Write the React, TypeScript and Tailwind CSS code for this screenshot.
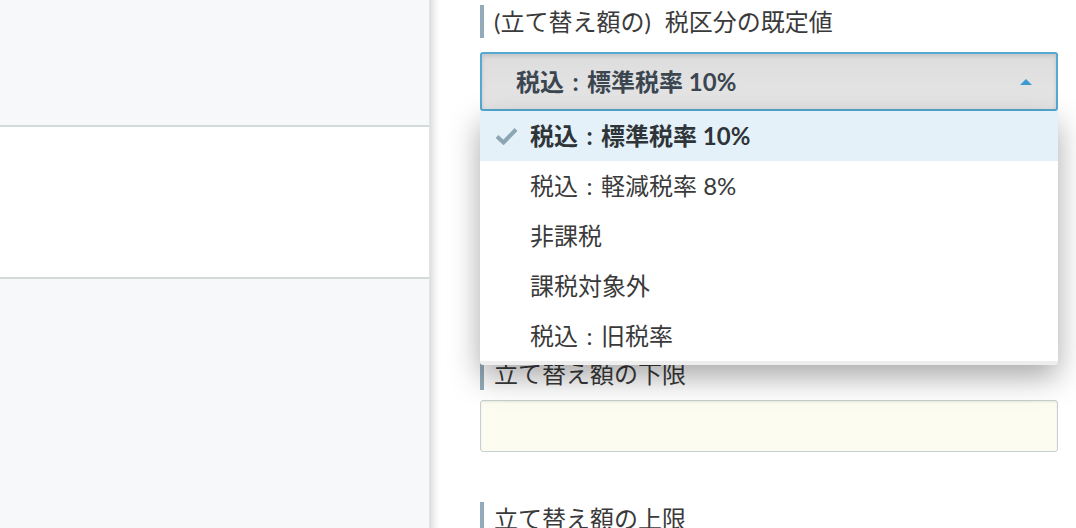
type Opt = { pre: string; rest: string };

const options: Opt[] = [
  { pre: '税込', rest: '標準税率 10%' },
  { pre: '税込', rest: '軽減税率 8%' },
  { pre: '', rest: '非課税' },
  { pre: '', rest: '課税対象外' },
  { pre: '税込', rest: '旧税率' },
];

function OptText({ opt }: { opt: Opt }) {
  if (!opt.pre) return <span>{opt.rest}</span>;
  return (
    <span className="flex items-center">
      <span>{opt.pre}</span>
      <span className="w-[23px] text-center">:</span>
      <span>{opt.rest}</span>
    </span>
  );
}

function FieldLabel({ children }: { children: React.ReactNode }) {
  return (
    <div className="flex h-[33px] items-center border-l-4 border-[#93abb9] pl-[10px] text-[24px] leading-none text-[#3a3a3a]">
      {children}
    </div>
  );
}

function CheckIcon() {
  return (
    <svg width="23" height="18" viewBox="0 0 23 18" className="shrink-0">
      <polyline
        points="2,9.5 8.5,15.5 21,2.5"
        fill="none"
        stroke="#8da6b4"
        strokeWidth="4"
        strokeLinejoin="miter"
      />
    </svg>
  );
}

export default function App() {
  return (
    <div className="flex h-[528px] w-[1076px] overflow-hidden bg-white font-[Lato,'Noto_Sans_CJK_JP',sans-serif]">
      {/* Left list */}
      <div className="flex w-[430px] shrink-0 flex-col border-r border-[#e1e3e3]">
        <div className="h-[127px] border-b-2 border-[#d3dada] bg-[#f7f8fa]" />
        <div className="h-[152px] border-b-2 border-[#d3dada] bg-white" />
        <div className="flex-1 bg-[#f7f8fa]" />
      </div>

      {/* Right form */}
      <div className="flex-1 bg-white pl-[50px] pr-[18px] pt-[5px] shadow-[inset_11px_0_10px_-9px_rgba(0,0,0,0.2)]">
        <FieldLabel>
          <span>(立て替え額の)</span>
          <span className="ml-[14px]">税区分の既定値</span>
        </FieldLabel>

        <div className="relative mt-[14px]">
          <div className="flex h-[59px] items-center justify-between rounded-[3px] border-2 border-[#55a8d2] bg-gradient-to-b from-[#dddddd] to-[#e6e6e6] pl-[34px] pr-[24px] shadow-[inset_0_2px_4px_rgba(0,0,0,0.12)]">
            <span className="text-[24px] font-bold text-[#3b4651]">
              <OptText opt={options[0]} />
            </span>
            <span className="h-0 w-0 border-x-[6px] border-b-[6px] border-x-transparent border-b-[#3d9ad1]" />
          </div>

          <div className="absolute left-0 right-0 top-full z-10 overflow-hidden rounded-b-[3px] border-b-4 border-[#eeeeee] bg-white shadow-[0_12px_30px_rgba(0,0,0,0.34)]">
            {options.map((opt, i) =>
              i === 0 ? (
                <div key={opt.rest} className="flex h-[50px] items-center gap-3 bg-[#e4f1f8] pl-[15px] text-[24px] font-bold text-[#2f3439]">
                  <CheckIcon />
                  <OptText opt={opt} />
                </div>
              ) : (
                <div key={opt.rest} className="flex h-[50px] items-center pl-[50px] text-[24px] text-[#3a3a3a]">
                  <OptText opt={opt} />
                </div>
              ),
            )}
          </div>
        </div>

        <div className="mt-[246px]">
          <FieldLabel>立て替え額の下限</FieldLabel>
        </div>
        <div className="mt-[10px] h-[52px] rounded-[3px] border border-[#c7cfd1] bg-[#fcfdf0] shadow-[inset_0_1px_2px_rgba(0,0,0,0.08)]" />

        <div className="mt-[50px]">
          <FieldLabel>立て替え額の上限</FieldLabel>
        </div>
      </div>
    </div>
  );
}
